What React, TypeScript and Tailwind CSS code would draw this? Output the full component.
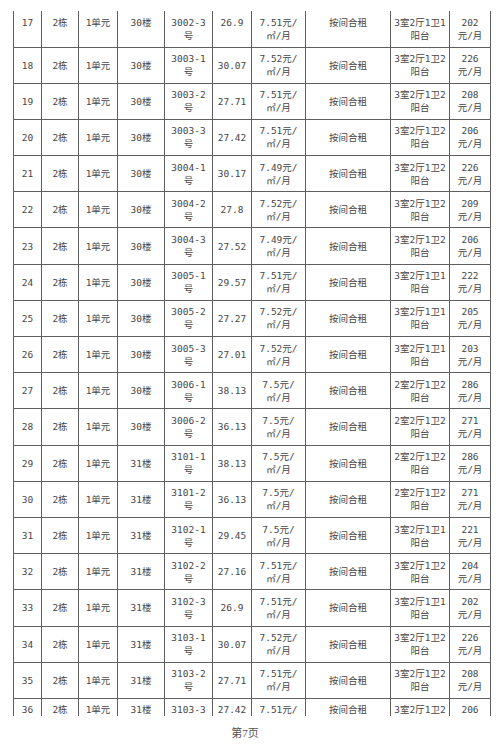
type Row = {
  no: number;
  floor: string;
  room: string;
  area: string;
  price: string;
  layout: string;
  rent: string;
};

const ROWS: Row[] = [
  { no: 17, floor: "30楼", room: "3002-3", area: "26.9", price: "7.51", layout: "3室2厅1卫1", rent: "202" },
  { no: 18, floor: "30楼", room: "3003-1", area: "30.07", price: "7.52", layout: "3室2厅1卫2", rent: "226" },
  { no: 19, floor: "30楼", room: "3003-2", area: "27.71", price: "7.51", layout: "3室2厅1卫2", rent: "208" },
  { no: 20, floor: "30楼", room: "3003-3", area: "27.42", price: "7.51", layout: "3室2厅1卫2", rent: "206" },
  { no: 21, floor: "30楼", room: "3004-1", area: "30.17", price: "7.49", layout: "3室2厅1卫2", rent: "226" },
  { no: 22, floor: "30楼", room: "3004-2", area: "27.8", price: "7.52", layout: "3室2厅1卫2", rent: "209" },
  { no: 23, floor: "30楼", room: "3004-3", area: "27.52", price: "7.49", layout: "3室2厅1卫2", rent: "206" },
  { no: 24, floor: "30楼", room: "3005-1", area: "29.57", price: "7.51", layout: "3室2厅1卫1", rent: "222" },
  { no: 25, floor: "30楼", room: "3005-2", area: "27.27", price: "7.52", layout: "3室2厅1卫1", rent: "205" },
  { no: 26, floor: "30楼", room: "3005-3", area: "27.01", price: "7.52", layout: "3室2厅1卫1", rent: "203" },
  { no: 27, floor: "30楼", room: "3006-1", area: "38.13", price: "7.5", layout: "2室2厅1卫2", rent: "286" },
  { no: 28, floor: "30楼", room: "3006-2", area: "36.13", price: "7.5", layout: "2室2厅1卫2", rent: "271" },
  { no: 29, floor: "31楼", room: "3101-1", area: "38.13", price: "7.5", layout: "2室2厅1卫2", rent: "286" },
  { no: 30, floor: "31楼", room: "3101-2", area: "36.13", price: "7.5", layout: "2室2厅1卫2", rent: "271" },
  { no: 31, floor: "31楼", room: "3102-1", area: "29.45", price: "7.5", layout: "3室2厅1卫1", rent: "221" },
  { no: 32, floor: "31楼", room: "3102-2", area: "27.16", price: "7.51", layout: "3室2厅1卫2", rent: "204" },
  { no: 33, floor: "31楼", room: "3102-3", area: "26.9", price: "7.51", layout: "3室2厅1卫1", rent: "202" },
  { no: 34, floor: "31楼", room: "3103-1", area: "30.07", price: "7.52", layout: "3室2厅1卫2", rent: "226" },
  { no: 35, floor: "31楼", room: "3103-2", area: "27.71", price: "7.51", layout: "3室2厅1卫2", rent: "208" },
  { no: 36, floor: "31楼", room: "3103-3", area: "27.42", price: "7.51", layout: "3室2厅1卫2", rent: "206" },
];

function Cell({ top, cut, lines }: { top?: boolean; cut?: boolean; lines: string[] }) {
  const shown = cut ? lines.slice(0, 1) : lines;
  return (
    <div
      className={`flex flex-col items-center border-r border-b border-[#5f5f5f] text-center leading-[13px] ${
        top ? "justify-start pt-[5px]" : cut ? "justify-start pt-[4px]" : "justify-center"
      }`}
    >
      {shown.map((l, i) => (
        <span key={i}>{l}</span>
      ))}
    </div>
  );
}

export default function App() {
  return (
    <main
      className="w-[500px] h-[747px] bg-white text-[#464646] text-[9.5px] overflow-hidden"
      style={{ fontFamily: '"DejaVu Sans Mono", "Noto Sans CJK SC", monospace' }}
    >
      <div className="pt-[11px]">
        <div className="h-[705px] overflow-hidden">
          {ROWS.map((r, idx) => {
            const top = idx === 0;
            const cut = idx === ROWS.length - 1;
            return (
              <div
                key={r.no}
                className={`ml-[13px] grid grid-cols-[28px_37px_39px_47px_48px_39px_54px_85px_59px_41px] border-l border-[#5f5f5f] ${
                  top ? "h-[36.5px]" : "h-[36.2px]"
                }`}
              >
                <Cell top={top} cut={cut} lines={[String(r.no)]} />
                <Cell top={top} cut={cut} lines={["2栋"]} />
                <Cell top={top} cut={cut} lines={["1单元"]} />
                <Cell top={top} cut={cut} lines={[r.floor]} />
                <Cell top={top} cut={cut} lines={[r.room, "号"]} />
                <Cell top={top} cut={cut} lines={[r.area]} />
                <Cell top={top} cut={cut} lines={[`${r.price}元/`, "㎡/月"]} />
                <Cell top={top} cut={cut} lines={["按间合租"]} />
                <Cell top={top} cut={cut} lines={[r.layout, "阳台"]} />
                <Cell top={top} cut={cut} lines={[r.rent, "元/月"]} />
              </div>
            );
          })}
        </div>
      </div>
      <div
        className="mt-[9px] flex justify-center pr-[10px] text-[11px] leading-[16px] text-[#555]"
        style={{ fontFamily: '"Liberation Serif", "Noto Sans CJK SC", serif' }}
      >
        第7页
      </div>
    </main>
  );
}
